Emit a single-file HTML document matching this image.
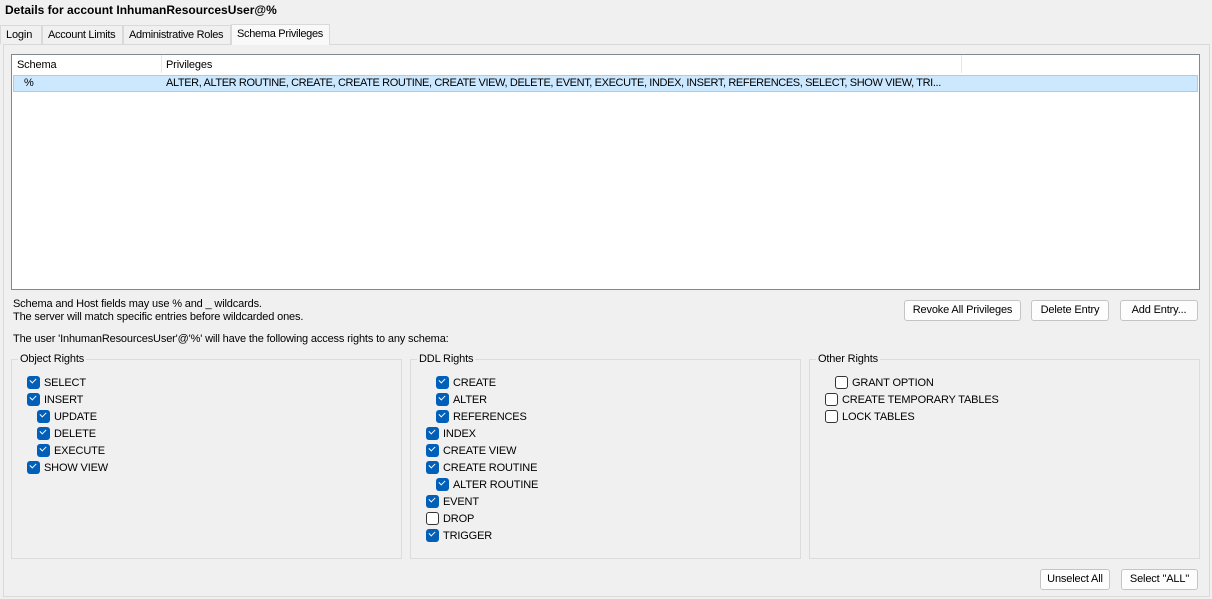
<!DOCTYPE html><html><head><style>
body{margin:0;width:1212px;height:599px;background:#f0f0f0;font-family:"Liberation Sans",sans-serif;font-size:11px;letter-spacing:-0.15px;color:#000;position:relative;overflow:hidden}
.a{position:absolute;white-space:nowrap}
.tab{position:absolute;top:25px;height:19px;border:1px solid #d9d9d9;border-bottom:none;background:#f0f0f0;line-height:19px;padding-left:5px;box-sizing:border-box;overflow:hidden}
.btn{position:absolute;height:21px;border:1px solid #c4c4c4;border-radius:3px;background:#fdfdfd;text-align:center;line-height:19px;box-sizing:border-box}
.grp{position:absolute;top:359px;height:200px;width:391px;border:1px solid #dcdcdc;box-sizing:border-box}
.grp span{position:absolute;top:-7px;left:6px;background:#f0f0f0;padding:0 2px}
.cb{position:absolute;width:13px;height:13px;border-radius:3px;box-sizing:border-box}
.on{background:#005fb8}
.on::after{content:"";position:absolute;left:3px;top:2px;width:5px;height:3px;border-left:1.3px solid #fff;border-bottom:1.3px solid #fff;transform:rotate(-45deg)}
.off{border:1px solid #333;background:#fff}
</style></head><body>
<div class="a" style="left:5px;top:3px;font-weight:bold;font-size:12px;letter-spacing:0">Details for account InhumanResourcesUser@%</div>
<div class="a" style="left:3px;top:44px;width:1207px;height:553px;border:1px solid #d9d9d9;box-sizing:border-box;background:#f0f0f0"></div>
<div class="tab" style="left:0;width:42px">Login</div>
<div class="tab" style="left:42px;width:81px;letter-spacing:-0.3px">Account Limits</div>
<div class="tab" style="left:123px;width:108px;letter-spacing:-0.3px">Administrative Roles</div>
<div class="tab" style="left:231px;top:24px;height:21px;width:99px;background:#f9f9f9;z-index:2;letter-spacing:-0.3px">Schema Privileges</div>
<div class="a" style="left:11px;top:54px;width:1189px;height:236px;background:#fff;border:1px solid #828790;box-sizing:border-box"></div>
<div class="a" style="left:161px;top:55px;width:1px;height:18px;background:#e5e5e5"></div>
<div class="a" style="left:961px;top:55px;width:1px;height:18px;background:#e5e5e5"></div>
<div class="a" style="left:17px;top:59px">Schema</div>
<div class="a" style="left:166px;top:59px">Privileges</div>
<div class="a" style="left:13px;top:75px;width:1185px;height:17px;background:#cce8ff;border:1px solid #99d1ff;box-sizing:border-box"></div>
<div class="a" style="left:24px;top:77px">%</div>
<div class="a" style="left:166px;top:77px;letter-spacing:-0.38px">ALTER, ALTER ROUTINE, CREATE, CREATE ROUTINE, CREATE VIEW, DELETE, EVENT, EXECUTE, INDEX, INSERT, REFERENCES, SELECT, SHOW VIEW, TRI...</div>
<div class="a" style="left:13px;top:298px">Schema and Host fields may use % and _ wildcards.</div>
<div class="a" style="left:13px;top:311px">The server will match specific entries before wildcarded ones.</div>
<div class="a" style="left:13px;top:333px">The user 'InhumanResourcesUser'@'%' will have the following access rights to any schema:</div>
<div class="btn" style="left:904px;top:300px;width:117px">Revoke All Privileges</div>
<div class="btn" style="left:1031px;top:300px;width:78px">Delete Entry</div>
<div class="btn" style="left:1120px;top:300px;width:78px">Add Entry...</div>
<div class="grp" style="left:11px"><span>Object Rights</span></div>
<div class="grp" style="left:410px"><span>DDL Rights</span></div>
<div class="grp" style="left:809px"><span>Other Rights</span></div>
<div class="btn" style="left:1040px;top:569px;width:70px">Unselect All</div>
<div class="btn" style="left:1121px;top:569px;width:77px">Select "ALL"</div>
<div id="c"></div>
<script>
var items=[[27,376,1,"SELECT"],[27,393,1,"INSERT"],[37,410,1,"UPDATE"],[37,427,1,"DELETE"],[37,444,1,"EXECUTE"],[27,461,1,"SHOW VIEW"],
[436,376,1,"CREATE"],[436,393,1,"ALTER"],[436,410,1,"REFERENCES"],[426,427,1,"INDEX"],[426,444,1,"CREATE VIEW"],[426,461,1,"CREATE ROUTINE"],[436,478,1,"ALTER ROUTINE"],[426,495,1,"EVENT"],[426,512,0,"DROP"],[426,529,1,"TRIGGER"],
[835,376,0,"GRANT OPTION"],[825,393,0,"CREATE TEMPORARY TABLES"],[825,410,0,"LOCK TABLES"]];
var h="";items.forEach(function(i){h+='<div class="cb '+(i[2]?'on':'off')+'" style="left:'+i[0]+'px;top:'+i[1]+'px"></div><div class="a" style="left:'+(i[0]+17)+'px;top:'+(i[1]+1)+'px">'+i[3]+'</div>';});
document.getElementById("c").innerHTML=h;
</script>
</body></html>
